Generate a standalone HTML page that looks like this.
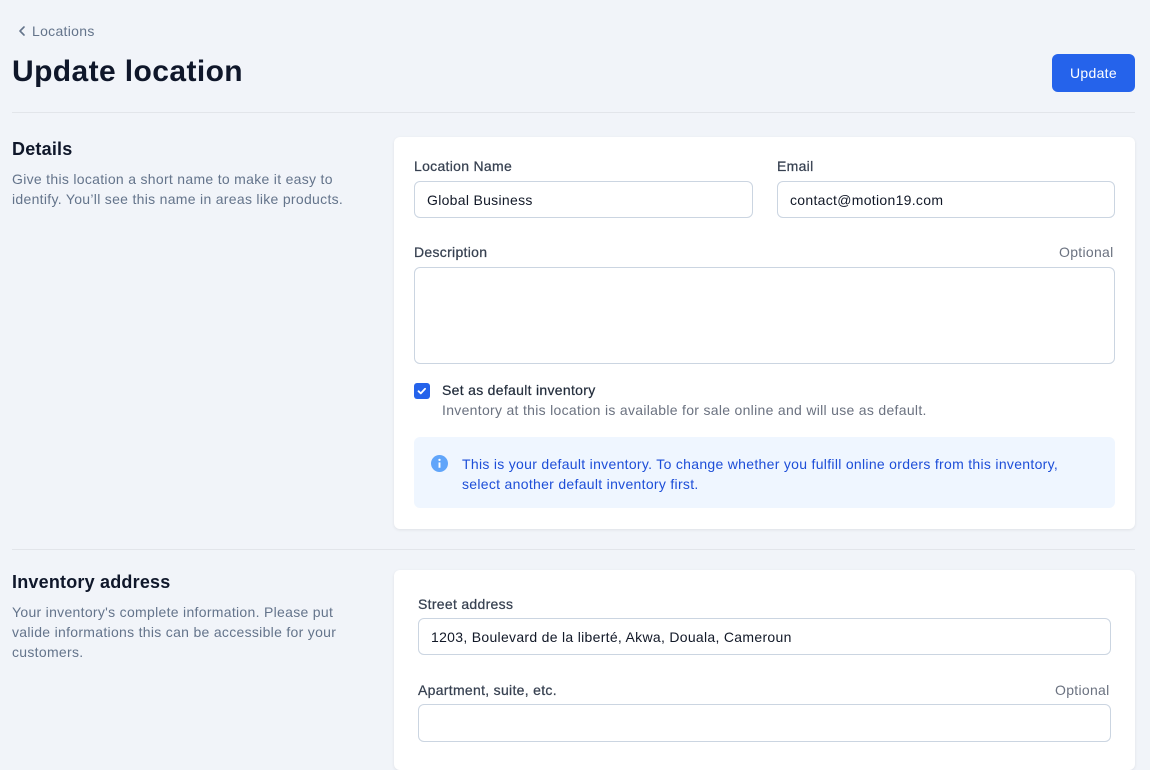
<!DOCTYPE html>
<html><head><style>
*{box-sizing:border-box;margin:0;padding:0}
body{width:1150px;height:761px;overflow:hidden;background:#f1f4f9;font-family:"Liberation Sans",sans-serif;position:relative;color:#111827;letter-spacing:0.3px}
.a{position:absolute}
.back{left:17px;top:23px;font-size:14px;color:#64748b}
h1{position:absolute;left:12px;top:55px;font-size:30px;font-weight:700;color:#0f172a;letter-spacing:0.4px}
.btn{left:1052px;top:54px;width:83px;height:38px;background:#2563eb;border-radius:6px;color:#fff;font-size:14px;display:flex;align-items:center;justify-content:center}
.hr{left:12px;width:1123px;height:1px;background:#e2e5ea}
h2{position:absolute;font-size:18px;font-weight:700;color:#0f172a;letter-spacing:0.2px}
.desc{font-size:14px;line-height:20px;color:#64748b;width:345px}
.card{background:#fff;border-radius:6px;box-shadow:0 1px 3px rgba(0,0,0,.08);left:394px;width:741px}
.lbl{font-size:14px;color:#374151;-webkit-text-stroke:0.25px #374151}
.opt{font-size:14px;color:#6b7280}
.inp{border:1px solid #cbd5e1;border-radius:6px;background:#fff;font-size:14px;color:#111827;padding-left:12px;display:flex;align-items:center}
</style></head><body>
<div class="a back"><svg width="10" height="12" viewBox="0 0 10 12" style="vertical-align:-1px;margin-right:5px"><path d="M7 2L3 6l4 4" stroke="#64748b" stroke-width="1.6" fill="none" stroke-linecap="round" stroke-linejoin="round"/></svg>Locations</div>
<h1>Update location</h1>
<div class="a btn">Update</div>
<div class="a hr" style="top:112px"></div>
<h2 style="left:12px;top:139px">Details</h2>
<div class="a desc" style="left:12px;top:169px">Give this location a short name to make it easy to identify. You’ll see this name in areas like products.</div>
<div class="a card" style="top:137px;height:392px"></div>
<div class="a lbl" style="left:414px;top:158px">Location Name</div>
<div class="a lbl" style="left:777px;top:158px">Email</div>
<div class="a inp" style="left:414px;top:181px;width:339px;height:37px">Global Business</div>
<div class="a inp" style="left:777px;top:181px;width:338px;height:37px">contact@motion19.com</div>
<div class="a lbl" style="left:414px;top:244px">Description</div>
<div class="a opt" style="left:1059px;top:244px">Optional</div>
<div class="a inp" style="left:414px;top:267px;width:701px;height:97px"></div>
<div class="a" style="left:414px;top:383px;width:16px;height:16px;background:#2563eb;border-radius:3px"><svg width="16" height="16" viewBox="0 0 16 16"><path d="M4.5 8.2l2.3 2.2 4.3-4.6" stroke="#fff" stroke-width="1.8" fill="none" stroke-linecap="round" stroke-linejoin="round"/></svg></div>
<div class="a lbl" style="left:442px;top:382px;color:#1f2937">Set as default inventory</div>
<div class="a opt" style="left:442px;top:402px">Inventory at this location is available for sale online and will use as default.</div>
<div class="a" style="left:414px;top:437px;width:701px;height:71px;background:#eff6ff;border-radius:6px"></div>
<svg class="a" style="left:431px;top:455px" width="17" height="17" viewBox="0 0 16 16"><circle cx="8" cy="8" r="8" fill="#60a5fa"/><rect x="7.1" y="7" width="1.8" height="5" fill="#fff"/><circle cx="8" cy="4.6" r="1.1" fill="#fff"/></svg>
<div class="a" style="left:462px;top:454px;font-size:14px;line-height:20px;color:#1d4ed8;width:625px">This is your default inventory. To change whether you fulfill online orders from this inventory, select another default inventory first.</div>
<div class="a hr" style="top:549px"></div>
<h2 style="left:12px;top:572px">Inventory address</h2>
<div class="a desc" style="left:12px;top:602px">Your inventory's complete information. Please put valide informations this can be accessible for your customers.</div>
<div class="a card" style="top:570px;height:200px"></div>
<div class="a lbl" style="left:418px;top:596px">Street address</div>
<div class="a inp" style="left:418px;top:618px;width:693px;height:37px">1203, Boulevard de la liberté, Akwa, Douala, Cameroun</div>
<div class="a lbl" style="left:418px;top:682px">Apartment, suite, etc.</div>
<div class="a opt" style="left:1055px;top:682px">Optional</div>
<div class="a inp" style="left:418px;top:704px;width:693px;height:38px"></div>
</body></html>
